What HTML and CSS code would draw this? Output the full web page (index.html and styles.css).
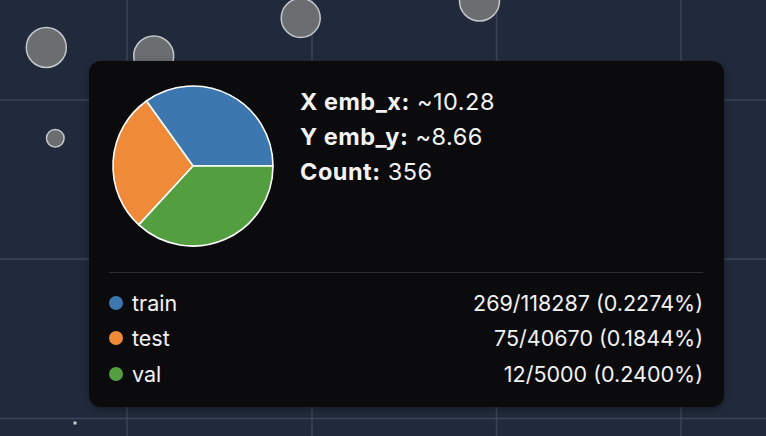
FILE: index.html
```html
<!DOCTYPE html>
<html>
<head>
<meta charset="utf-8">
<link rel="stylesheet" href="styles.css">
</head>
<body>
<div class="plot">
  <svg class="plot-bg" width="766" height="436" viewBox="0 0 766 436">
    <g class="grid">
      <line x1="127" y1="0" x2="127" y2="436"/>
      <line x1="312" y1="0" x2="312" y2="436"/>
      <line x1="496.5" y1="0" x2="496.5" y2="436"/>
      <line x1="681" y1="0" x2="681" y2="436"/>
      <line x1="0" y1="100" x2="766" y2="100"/>
      <line x1="0" y1="259" x2="766" y2="259"/>
      <line x1="0" y1="418.5" x2="766" y2="418.5"/>
    </g>
    <g class="points">
      <circle cx="46.3" cy="47.5" r="20"/>
      <circle cx="153.7" cy="56" r="20"/>
      <circle cx="300.7" cy="18" r="19.5"/>
      <circle cx="479.5" cy="1" r="20"/>
      <circle cx="55.3" cy="138.3" r="8.8"/>
    </g>
    <rect class="speck" x="73.5" y="421.5" width="3" height="3"/>
  </svg>

  <div class="tooltip">
    <div class="summary">
      <svg class="pie" width="170" height="170" viewBox="-85 -85 170 170">
        <path class="s-train" d="M0 0 L80 0 A80 80 0 0 0 -46.6 -65.0 Z"/>
        <path class="s-test" d="M0 0 L-46.6 -65.0 A80 80 0 0 0 -54.2 58.9 Z"/>
        <path class="s-val" d="M0 0 L-54.2 58.9 A80 80 0 0 0 80 0 Z"/>
      </svg>
      <div class="stats">
        <div class="stat"><b>X emb_x:</b> ~10.28</div>
        <div class="stat"><b>Y emb_y:</b> ~8.66</div>
        <div class="stat"><b>Count:</b> 356</div>
      </div>
    </div>
    <div class="divider"></div>
    <div class="legend">
      <div class="row"><span class="dot train"></span><span class="name">train</span><span class="val">269/118287 (0.2274%)</span></div>
      <div class="row"><span class="dot test"></span><span class="name">test</span><span class="val">75/40670 (0.1844%)</span></div>
      <div class="row"><span class="dot valc"></span><span class="name">val</span><span class="val">12/5000 (0.2400%)</span></div>
    </div>
  </div>
</div>
</body>
</html>
```

FILE: styles.css
```css
* { box-sizing: border-box; }
html, body {
  margin: 0;
  padding: 0;
  width: 766px;
  height: 436px;
  overflow: hidden;
  background: #212a3b;
  font-family: Inter, "Noto Sans", "Liberation Sans", sans-serif;
}
.plot {
  position: relative;
  width: 766px;
  height: 436px;
}
.plot-bg {
  position: absolute;
  left: 0;
  top: 0;
  display: block;
}
.grid line {
  stroke: #3a4458;
  stroke-width: 1.5;
}
.points circle {
  fill: #6b6e70;
  stroke: #c3c7cb;
  stroke-width: 1.5;
}
.speck { fill: #c8ccd4; }

.tooltip {
  position: absolute;
  left: 89px;
  top: 61px;
  width: 635px;
  height: 346px;
  background: #0b0b0d;
  border-radius: 12px;
  box-shadow: 0 2px 6px rgba(0,0,0,0.35);
  padding: 20px 21px 0 19px;
  color: #f2f2f2;
  display: flex;
  flex-direction: column;
}
.summary {
  display: flex;
  align-items: flex-start;
  gap: 22px;
}
.pie { display: block; flex: none; }
.pie path {
  stroke: #ffffff;
  stroke-width: 1.6;
  stroke-linejoin: round;
}
.s-train { fill: #3c77b0; }
.s-test { fill: #ef8a38; }
.s-val { fill: #539f40; }

.stats {
  padding-top: 3px;
  font-size: 23.5px;
  letter-spacing: 0.5px;
  line-height: 35px;
}
.stat b { font-weight: 700; }

.divider {
  height: 1px;
  background: #2c2c31;
  margin: 21px 0 0 1px;
}
.legend {
  display: flex;
  flex-direction: column;
  padding-top: 12px;
  padding-left: 1px;
}
.row {
  display: flex;
  align-items: center;
  height: 35.5px;
  font-size: 21.5px;
}
.dot {
  width: 14px;
  height: 14px;
  border-radius: 50%;
  margin-right: 9px;
  flex: none;
}
.dot.train { background: #3c77b0; }
.dot.test { background: #ef8a38; }
.dot.valc { background: #539f40; }
.name { flex: 1; }
.val { text-align: right; }
```
